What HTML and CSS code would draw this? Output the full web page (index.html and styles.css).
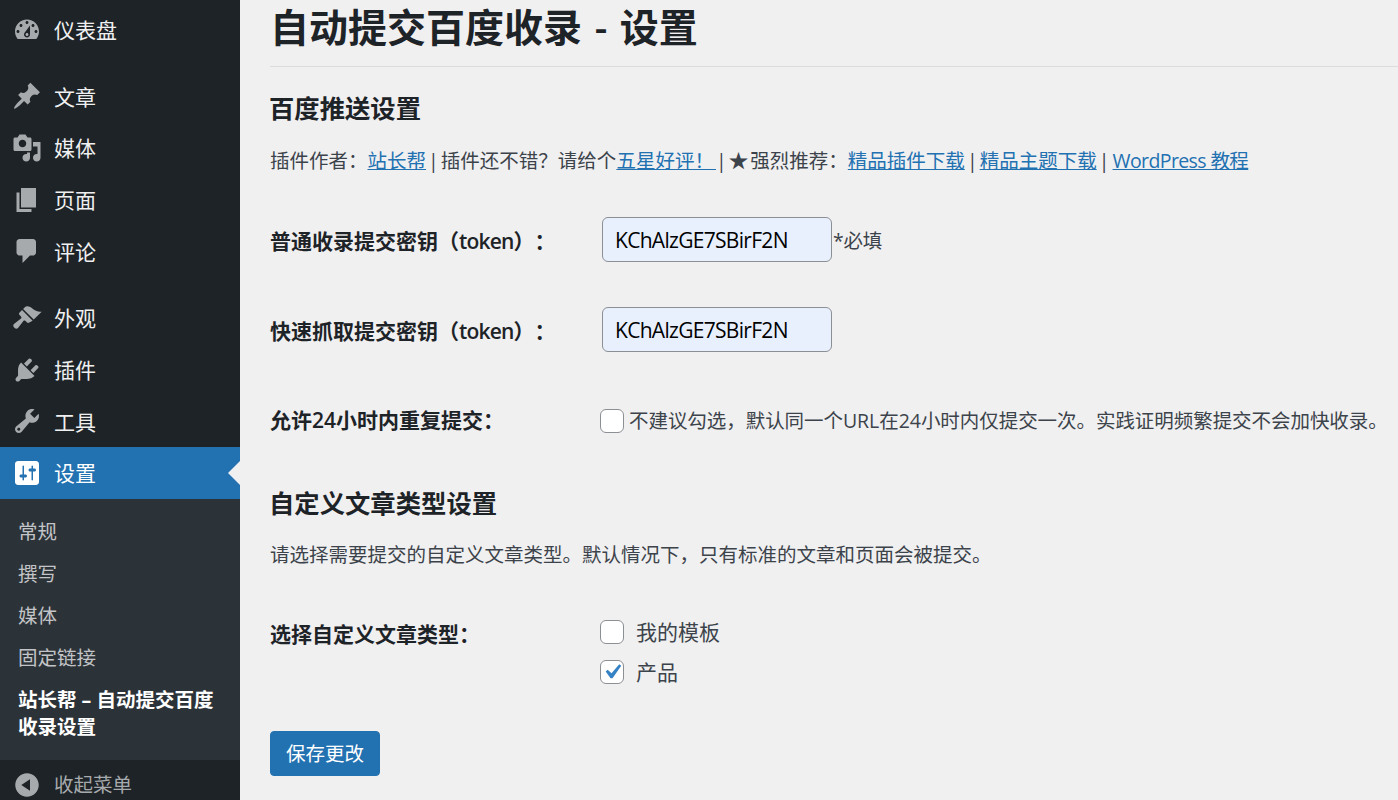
FILE: index.html
```html
<!DOCTYPE html>
<html lang="zh-CN">
<head>
<meta charset="utf-8">
<title>自动提交百度收录 - 设置</title>
<link rel="stylesheet" href="styles.css">
</head>
<body>
<div class="layout">
<aside class="sidebar">
  <nav class="menu">
    <a class="item"><svg class="icon" viewBox="0 0 20 20"><path d="M3.76 16h12.48c1.1-1.37 1.76-3.11 1.76-5 0-4.42-3.58-8-8-8s-8 3.58-8 8c0 1.89.66 3.63 1.76 5zM10 4c.55 0 1 .45 1 1s-.45 1-1 1-1-.45-1-1 .45-1 1-1zM6 6c.55 0 1 .45 1 1s-.45 1-1 1-1-.45-1-1 .45-1 1-1zm8 0c.55 0 1 .45 1 1s-.45 1-1 1-1-.45-1-1 .45-1 1-1zm-5.37 5.55L12 7v6c0 1.1-.9 2-2 2s-2-.9-2-2c0-.57.24-1.08.63-1.45zM4 10c.55 0 1 .45 1 1s-.45 1-1 1-1-.45-1-1 .45-1 1-1zm12 0c.55 0 1 .45 1 1s-.45 1-1 1-1-.45-1-1 .45-1 1-1zm-5 3c0-.55-.45-1-1-1s-1 .45-1 1 .45 1 1 1 1-.45 1-1z"/></svg><span>仪表盘</span></a>
    <div class="sep"></div>
    <a class="item"><svg class="icon" viewBox="0 0 20 20"><path d="M10.44 3.02l1.82-1.82 6.36 6.35-1.83 1.82c-1.05-.68-2.48-.57-3.41.36l-.75.75c-.92.93-1.04 2.35-.35 3.41l-1.83 1.82-2.41-2.41-2.8 2.79c-.42.42-3.38 2.71-3.8 2.29s1.86-3.39 2.28-3.81l2.79-2.79L4.1 9.36l1.83-1.82c1.05.69 2.48.57 3.4-.36l.75-.75c.93-.92 1.05-2.35.36-3.41z"/></svg><span>文章</span></a>
    <a class="item"><svg class="icon" viewBox="0 0 20 20"><path d="M13 11V4c0-.55-.45-1-1-1h-1.67L9 1H5L3.67 3H2c-.55 0-1 .45-1 1v7c0 .55.45 1 1 1h10c.55 0 1-.45 1-1zM7 4.5c1.38 0 2.5 1.12 2.5 2.5S8.38 9.5 7 9.5 4.5 8.38 4.5 7 5.62 4.5 7 4.5zM14 6h5v10.5c0 1.38-1.12 2.5-2.5 2.5S14 17.88 14 16.5s1.12-2.5 2.5-2.5c.17 0 .34.02.5.05V9h-3V6zm-4 8.05V13h2v3.5c0 1.38-1.12 2.5-2.5 2.5S7 17.88 7 16.5 8.12 14 9.5 14c.17 0 .34.02.5.05z"/></svg><span>媒体</span></a>
    <a class="item"><svg class="icon" viewBox="0 0 20 20"><path d="M6 15V2h10v13H6zm-1 1h8v2H3V5h2v11z"/></svg><span>页面</span></a>
    <a class="item"><svg class="icon" viewBox="0 0 20 20"><path d="M5 2h9c1.1 0 2 .9 2 2v7c0 1.1-.9 2-2 2h-2l-5 5v-5H5c-1.1 0-2-.9-2-2V4c0-1.1.9-2 2-2z"/></svg><span>评论</span></a>
    <div class="sep"></div>
    <a class="item"><svg class="icon" viewBox="0 0 20 20"><path d="M14.48 11.06L7.41 3.99l1.5-1.5c.5-.56 2.3-.47 3.51.32 1.21.8 1.43 1.28 2.91 2.1 1.18.64 2.45 1.26 4.45.85zM13.77 11.77L6.7 4.7 4.93 6.47c-.39.39-.39 1.02 0 1.41l1.06 1.06c.39.39.39 1.03 0 1.42L1.3 14c-.6.6-.6 1.6 0 2.2l.5.5c.6.6 1.6.6 2.2 0l3.6-4.7c.39-.39 1.03-.39 1.42 0l1.06 1.06c.39.39 1.02.39 1.41 0z"/></svg><span>外观</span></a>
    <a class="item"><svg class="icon" viewBox="0 0 20 20"><path d="M13.11 4.36L9.87 7.6 8 5.73l3.24-3.24c.35-.34 1.05-.2 1.56.32.52.51.66 1.21.31 1.55zm-8 1.77l.91-1.12 9.01 9.01-1.19.84c-.71.71-2.63 1.16-3.82 1.16H6.14L4.9 17.26c-.59.59-1.54.59-2.12 0-.59-.58-.59-1.53 0-2.12l1.24-1.24v-3.88c0-1.13.4-3.19 1.09-3.89zm7.26 3.97l3.24-3.24c.34-.35 1.04-.21 1.55.31.52.51.66 1.21.31 1.55l-3.24 3.25z"/></svg><span>插件</span></a>
    <a class="item"><svg class="icon" viewBox="0 0 20 20"><path d="M16.68 9.77c-1.34 1.34-3.3 1.67-4.95.99l-5.41 6.52c-.99.99-2.59.99-3.58 0s-.99-2.59 0-3.57l6.52-5.42c-.68-1.65-.35-3.61.99-4.95 1.28-1.28 3.12-1.62 4.72-1.06l-2.89 2.89 2.82 2.82 2.86-2.87c.53 1.58.18 3.39-1.08 4.65zM3.81 16.21c.4.39 1.04.39 1.43 0 .4-.4.4-1.04 0-1.43-.39-.4-1.03-.4-1.43 0-.39.39-.39 1.03 0 1.43z"/></svg><span>工具</span></a>
    <a class="item current"><svg class="icon" viewBox="0 0 20 20"><path d="M18 16V4c0-1.1-.9-2-2-2H4c-1.1 0-2 .9-2 2v12c0 1.1.9 2 2 2h12c1.1 0 2-.9 2-2zM8 11h1c.55 0 1 .45 1 1s-.45 1-1 1H8v1.5c0 .28-.22.5-.5.5s-.5-.22-.5-.5V13H6c-.55 0-1-.45-1-1s.45-1 1-1h1V5.5c0-.28.22-.5.5-.5s.5.22.5.5V11zm5-2h-1c-.55 0-1-.45-1-1s.45-1 1-1h1V5.5c0-.28.22-.5.5-.5s.5.22.5.5V7h1c.55 0 1 .45 1 1s-.45 1-1 1h-1v5.5c0 .28-.22.5-.5.5s-.5-.22-.5-.5V9z"/></svg><span>设置</span></a>
    <ul class="submenu">
      <li>常规</li>
      <li>撰写</li>
      <li>媒体</li>
      <li>固定链接</li>
      <li class="active">站长帮 – 自动提交百度收录设置</li>
    </ul>
    <a class="item collapse"><svg class="icon" viewBox="0 0 20 20"><path d="M10 2.16c4.33 0 7.84 3.51 7.84 7.84s-3.51 7.84-7.84 7.84S2.16 14.33 2.16 10 5.71 2.16 10 2.16zm2 11.72V6.12L6.18 9.97z"/></svg><span>收起菜单</span></a>
  </nav>
</aside>
<main class="content">
  <h1 class="title">自动提交百度收录 - 设置</h1>
  <h2 class="section first">百度推送设置</h2>
  <p class="intro">插件作者：<a>站长帮</a> | 插件还不错？请给个<a>五星好评！ </a> | ★ 强烈推荐：<a>精品插件下载</a> | <a>精品主题下载</a> | <a class="wp">WordPress 教程</a></p>
  <form class="form">
    <div class="row field">
      <label class="name">普通收录提交密钥（<span class="latin">token</span>）：</label>
      <div class="value"><input class="text" type="text" value="KChAlzGE7SBirF2N"><span class="note">*必填</span></div>
    </div>
    <div class="row field">
      <label class="name">快速抓取提交密钥（<span class="latin">token</span>）：</label>
      <div class="value"><input class="text" type="text" value="KChAlzGE7SBirF2N"></div>
    </div>
    <div class="row check-row">
      <label class="name">允许24小时内重复提交：</label>
      <div class="value"><span class="box"></span><span class="nowrap">不建议勾选，默认同一个URL在24小时内仅提交一次。实践证明频繁提交不会加快收录。</span></div>
    </div>
    <h2 class="section second">自定义文章类型设置</h2>
    <p class="desc">请选择需要提交的自定义文章类型。默认情况下，只有标准的文章和页面会被提交。</p>
    <div class="row types">
      <label class="name">选择自定义文章类型：</label>
      <div class="stack">
        <div class="opt"><span class="box"></span><span class="opt-text">我的模板</span></div>
        <div class="opt"><span class="box"><svg class="tick" viewBox="0 0 20 20"><path d="M14.83 4.89l1.34.94-5.81 8.38H9.02L5.78 9.67l1.34-1.25 2.57 2.4z"/></svg></span><span class="opt-text">产品</span></div>
      </div>
    </div>
    <button class="save" type="button">保存更改</button>
  </form>
</main>
</div>
</body>
</html>
```
FILE: styles.css
```css
* { box-sizing: border-box; }
html, body { margin: 0; height: 800px; overflow: hidden; }
body {
  background: #f0f0f1;
  color: #3c434a;
  font-family: "Open Sans", "Noto Sans CJK SC", sans-serif;
  font-size: 19.5px;
  line-height: 1.4;
  text-spacing-trim: space-all;
}
.layout { display: flex; height: 800px; }

.sidebar { width: 240px; flex: none; background: #1d2327; height: 800px; overflow: hidden; }
.menu { padding-top: 3.8px; display: flex; flex-direction: column; }
.item {
  display: flex;
  align-items: center;
  height: 51.7px;
  flex: none;
  padding-left: 12px;
  color: #f0f0f1;
  font-size: 21px;
  position: relative;
}
.item span { padding-top: 2px; }
.icon { width: 30px; height: 30px; fill: #a7aaad; margin-right: 12px; flex: none; }
.sep { height: 15px; flex: none; }
.current { background: #2271b1; color: #fff; height: 52px; }
.item.current span { padding-top: 1px; }
.current .icon { fill: #fff; }
.current::after {
  content: "";
  position: absolute;
  right: 0;
  top: 50%;
  margin-top: -12px;
  border: 12px solid transparent;
  border-right-color: #f0f0f1;
  border-left-width: 0;
}
.submenu {
  list-style: none;
  margin: 0;
  padding: 18.5px 12px 20px 18px;
  background: #2c3338;
  color: #c3c4c7;
  display: flex;
  flex-direction: column;
  gap: 15px;
  font-size: 19.5px;
  line-height: 27px;
}
.active { color: #fff; font-weight: 700; }
.collapse { color: #a7aaad; height: 50px; }
.collapse span { font-size: 19.5px; }
.item.collapse span { padding-top: 0; }

.content { flex: 1; min-width: 0; padding: 0 0 0 30px; }
.title {
  margin: 0;
  height: 67px;
  padding: 1px 0 0 0;
  border-bottom: 1px solid #dcdcde;
  color: #1d2327;
  font-size: 39px;
  font-weight: 600;
  line-height: 52px;
  word-spacing: 2.5px;
}
.section { margin: 0 0 0 -1px; color: #1d2327; font-size: 25.35px; font-weight: 600; line-height: 34px; }
.first { margin-top: 24px; }
.second { margin-top: 52px; }
.intro { margin: 22px 0 0; line-height: 27px; white-space: nowrap; word-spacing: -3px; }
.intro a { color: #2271b1; text-decoration: underline; }
.intro .wp { letter-spacing: -0.6px; word-spacing: 0; margin-left: 1px; }
.desc { margin: 21px 0 0; line-height: 27px; }
.form { display: block; }
.row { display: flex; }
.name { width: 332px; flex: none; color: #1d2327; font-weight: 600; font-size: 21px; }
.latin { letter-spacing: -0.8px; }
.value { display: flex; align-items: center; }
.field { align-items: center; height: 45px; }
.field .name { padding-top: 5px; }
.field:first-child { margin-top: 43px; }
.field + .field { margin-top: 45px; }
.note { padding-top: 3px; letter-spacing: -0.3px; }
.text {
  width: 230px;
  height: 45px;
  padding: 1px 12px 0;
  border: 1px solid #8c8f94;
  border-radius: 6px;
  background: #e8f0fe;
  color: #000;
  font: 21px "Open Sans", "Noto Sans CJK SC", sans-serif;
  letter-spacing: -0.7px;
  margin-right: 1px;
}
.check-row { align-items: center; height: 27px; margin-top: 55px; }
.box {
  width: 24px;
  height: 24px;
  flex: none;
  border: 1px solid #8c8f94;
  border-radius: 6px;
  background: #fff;
  display: block;
  margin-left: -2px;
  margin-right: 5px;
}
.nowrap { white-space: nowrap; letter-spacing: -0.05px; }
.types { margin-top: 53px; }
.types .name { line-height: 27px; }
.stack { display: flex; flex-direction: column; gap: 16px; margin-top: -1px; margin-left: -2px; }
.opt { display: flex; align-items: center; height: 24px; font-size: 21px; }
.opt .box { margin: 0 12px 0 0; }
.opt-text { padding-top: 2px; }
.tick { width: 30px; height: 30px; margin: -4px; fill: #3582c4; display: block; }
.save {
  display: block;
  margin-top: 47px;
  width: 110px;
  height: 45px;
  padding: 0 0 2px;
  border: 1px solid #2271b1;
  border-radius: 4px;
  background: #2271b1;
  color: #fff;
  font: 19.5px "Open Sans", "Noto Sans CJK SC", sans-serif;
}
```
